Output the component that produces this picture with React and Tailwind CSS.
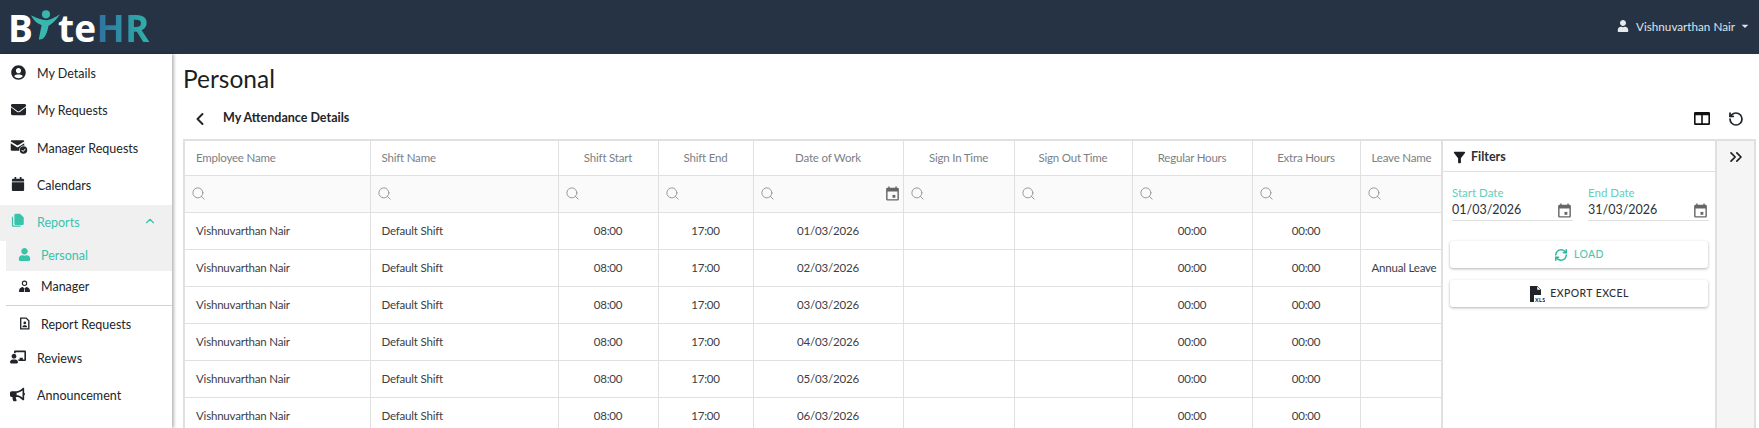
import React from 'react';
import { ChevronLeft, ChevronUp, ChevronsRight, RotateCcw, Search, RefreshCw } from 'lucide-react';
import { FaBullhorn, FaCalendar, FaChalkboardTeacher, FaEnvelope, FaUserCircle, FaUser } from 'react-icons/fa';
import { MdFilterAlt, MdArrowDropDown } from 'react-icons/md';

const columns = [
  { label: 'Employee Name', width: 'w-[185px]', left: true },
  { label: 'Shift Name', width: 'w-[188px]', left: true },
  { label: 'Shift Start', width: 'w-[100px]' },
  { label: 'Shift End', width: 'w-[95px]' },
  { label: 'Date of Work', width: 'w-[150px]', calendar: true },
  { label: 'Sign In Time', width: 'w-[111px]' },
  { label: 'Sign Out Time', width: 'w-[118px]' },
  { label: 'Regular Hours', width: 'w-[120px]' },
  { label: 'Extra Hours', width: 'w-[108px]' },
  { label: 'Leave Name', width: 'w-[85px]', left: true },
];

const rows = ['01', '02', '03', '04', '05', '06'];

const CalendarIcon = ({ className }) => (
  <svg viewBox="0 0 24 24" className={className} fill="currentColor">
    <path d="M19 4h-1V2h-2v2H8V2H6v2H5a2 2 0 0 0-2 2v14a2 2 0 0 0 2 2h14a2 2 0 0 0 2-2V6a2 2 0 0 0-2-2zm0 16H5V9h14v11z" />
    <rect x="12" y="14" width="4" height="4" />
  </svg>
);

const MailCheckIcon = ({ className }) => (
  <svg viewBox="0 0 24 20" className={className} fill="currentColor">
    <path d="M1 2.500A1.500 1.500 0 0 1 2.500 1h15A1.500 1.500 0 0 1 19 2.500L10 8 1 2.500z" />
    <path d="M1 5l9 5.500L19 5v3.200a6 6 0 0 0-6.800 6.800H2.500A1.500 1.500 0 0 1 1 13.500V5z" />
    <circle cx="18" cy="14" r="5" />
    <path d="M15.500 14l2 2 3-3.500" fill="none" stroke="#fff" strokeWidth="1.300" />
  </svg>
);

const ReportsIcon = ({ className }) => (
  <svg viewBox="0 0 24 24" className={className} fill="currentColor">
    <path d="M3 6h2v14h12v2H5a2 2 0 0 1-2-2V6z" />
    <path d="M9 1h7l6 6v10a2 2 0 0 1-2 2H9a2 2 0 0 1-2-2V3a2 2 0 0 1 2-2z" />
  </svg>
);

const ManagerIcon = ({ className }) => (
  <svg viewBox="0 0 24 24" className={className} fill="currentColor">
    <circle cx="12" cy="6" r="4" fill="none" stroke="currentColor" strokeWidth="2" />
    <path d="M2 22v-3c0-3 4-6 7-6l3 3 3-3c3 0 7 3 7 6v3H2z" />
    <path d="M12 17v5" stroke="#fff" strokeWidth="1.500" />
  </svg>
);

const ReportRequestIcon = ({ className }) => (
  <svg viewBox="0 0 24 24" className={className}>
    <path d="M5 2h10l5 5v15H5z" fill="none" stroke="currentColor" strokeWidth="2.500" />
    <circle cx="12.500" cy="11" r="2.500" fill="currentColor" />
    <path d="M8 19c0-3 2-4 4.500-4s4.500 1 4.500 4z" fill="currentColor" />
  </svg>
);

const ColumnsIcon = ({ className }) => (
  <svg viewBox="0 0 20 16" className={className} fill="currentColor">
    <path d="M1.500 0h17A1.500 1.500 0 0 1 20 1.500v13a1.500 1.500 0 0 1-1.500 1.500h-17A1.500 1.500 0 0 1 0 14.500v-13A1.500 1.500 0 0 1 1.500 0zM2 4v10h7V4H2zm9 0v10h7V4h-7z" fillRule="evenodd" />
  </svg>
);

const Logo = () => (
  <div className="flex items-center text-[37px] leading-none font-bold font-['Open_Sans',sans-serif] tracking-[0.2px] h-[30px]">
    <span className="text-white">B</span>
    <svg viewBox="0 0 30 32" className="w-[29px] h-[34px] -mx-[2px] -mt-[5px]">
      <circle cx="15.500" cy="5" r="4.200" fill="#38b6b0" />
      <path d="M0 6c3 6 7 9 11 10L8 31c6 1 9-7 10-14 4-2 8-6 12-12-5 3-10 6-14 6-5 0-10-2-16-5z" fill="#38b6b0" />
    </svg>
    <span className="text-white">te</span>
    <span className="bg-gradient-to-r from-[#2f6f9f] to-[#2fb3a8] bg-clip-text text-transparent">HR</span>
  </div>
);

const NavItem = ({ icon: Icon, label, className = 'h-[37px]', iconClass = 'w-[17px] h-[17px] mr-[10px]' }) => (
  <div className={`flex items-center pl-[10px] text-[#212529] ${className}`}>
    <span className="w-[27px] shrink-0 -mt-[5px]">
      <Icon className={iconClass} />
    </span>
    <span>{label}</span>
  </div>
);

const SubItem = ({ icon: Icon, label, className = '' }) => (
  <div className={`flex items-center ml-[6px] pl-[12px] ${className}`}>
    <span className="w-[23px] shrink-0 -mt-[3px]">
      <Icon className="w-[13px] h-[13px]" />
    </span>
    <span>{label}</span>
  </div>
);

const App = () => {
  return (
    <div className="h-screen overflow-hidden flex flex-col bg-white font-['Lato',sans-serif] text-[12.5px]">
      {/* Header */}
      <header className="h-[54px] shrink-0 bg-[#263345] flex items-center justify-between pl-[8px] pr-[6px]">
        <Logo />
        <div className="flex items-center text-[#dfe3e8] text-[11.7px] -mt-[1px]">
          <FaUser className="w-[12px] h-[12px] mr-[7px] text-[#e6e9ec]" />
          <span>Vishnuvarthan Nair</span>
          <MdArrowDropDown className="w-[16px] h-[16px] ml-[2px]" />
        </div>
      </header>

      <div className="flex flex-1 min-h-0">
        {/* Sidebar */}
        <aside className="w-[172px] shrink-0 pt-[2px] shadow-[2px_0_3px_rgba(0,0,0,0.28)] z-10">
          <NavItem icon={FaUserCircle} label="My Details" iconClass="w-[15px] h-[15px] ml-px" />
          <NavItem icon={FaEnvelope} label="My Requests" iconClass="w-[15px] h-[15px] ml-px" />
          <NavItem icon={MailCheckIcon} label="Manager Requests" className="h-[38px]" iconClass="w-[18px] h-[16px]" />
          <NavItem icon={FaCalendar} label="Calendars" iconClass="w-[14px] h-[14px] ml-px" />
          <div className="h-[36px] bg-[#f0f0f0] flex items-center pl-[10px] pr-[15px] text-[#38c3ab]">
            <span className="w-[27px] shrink-0 -mt-[5px]">
              <ReportsIcon className="w-[15px] h-[15px]" />
            </span>
            <span className="flex-1">Reports</span>
            <ChevronUp className="w-[14px] h-[14px] -mt-1" />
          </div>
          <SubItem icon={FaUser} label="Personal" className="h-[30px] bg-[#f0f0f0] text-[#38c3ab]" />
          <SubItem icon={ManagerIcon} label="Manager" className="h-[33px] text-[#212529]" />
          <div className="ml-[6px] border-t border-[#d2d2d2] mt-[1px]" />
          <SubItem icon={ReportRequestIcon} label="Report Requests" className="h-[38px] text-[#212529]" />
          <NavItem icon={FaChalkboardTeacher} label="Reviews" className="h-[30px]" iconClass="w-[16px] h-[16px]" />
          <NavItem icon={FaBullhorn} label="Announcement" className="h-[45px]" iconClass="w-[15px] h-[15px]" />
        </aside>

        {/* Main */}
        <main className="flex-1 min-w-0 pl-[11px] pr-[3px] flex flex-col">
          <h1 className="text-[24.5px] leading-[33px] mt-[8px] text-[#1b1f23]">Personal</h1>
          <div className="flex items-center h-[41px] mt-[3px] text-[#212529]">
            <ChevronLeft className="w-[20px] h-[20px] ml-[7px] mr-[13px]" strokeWidth={2.4} />
            <span className="text-[12.5px] font-bold flex-1">My Attendance Details</span>
            <ColumnsIcon className="w-[16px] h-[13px] mr-[18px] text-[#111]" />
            <RotateCcw className="w-[16px] h-[16px] mr-[12px]" strokeWidth={2.6} />
          </div>

          {/* Grid + filters */}
          <div className="flex-1 min-h-0 flex border-2 border-b-0 border-[#e0e0e0] overflow-hidden">
            <div className="w-[1258px] shrink-0 overflow-hidden border-r-2 border-[#e0e0e0]">
              <table className="table-fixed border-collapse w-[1260px] text-[11.5px] tracking-[-0.2px]">
                <thead>
                  <tr className="h-[34px] text-[#7b7f85]">
                    {columns.map((col) => (
                      <th
                        key={col.label}
                        className={`${col.width} font-normal whitespace-nowrap overflow-hidden border-r border-b border-[#e0e0e0] ${col.left ? 'text-left pl-[11px]' : 'text-center'}`}
                      >
                        {col.label}
                      </th>
                    ))}
                  </tr>
                  <tr className="h-[37px] bg-[#fafafa] text-[#9a9a9a]">
                    {columns.map((col) => (
                      <th key={col.label} className="border-r border-b border-[#e0e0e0] pl-[6px] pr-[2px] font-normal">
                        <div className="flex items-center justify-between">
                          <Search className="w-[15px] h-[15px]" strokeWidth={1.6} />
                          {col.calendar && <CalendarIcon className="w-[17px] h-[17px] text-[#666]" />}
                        </div>
                      </th>
                    ))}
                  </tr>
                </thead>
                <tbody className="text-[#3c4045]">
                  {rows.map((day) => (
                    <tr key={day} className="h-[37px]">
                      <td className="pl-[11px] border-r border-b border-[#e0e0e0]">Vishnuvarthan Nair</td>
                      <td className="pl-[11px] border-r border-b border-[#e0e0e0]">Default Shift</td>
                      <td className="text-center border-r border-b border-[#e0e0e0]">08:00</td>
                      <td className="text-center border-r border-b border-[#e0e0e0]">17:00</td>
                      <td className="text-center border-r border-b border-[#e0e0e0]">{day}/03/2026</td>
                      <td className="border-r border-b border-[#e0e0e0]" />
                      <td className="border-r border-b border-[#e0e0e0]" />
                      <td className="text-center border-r border-b border-[#e0e0e0]">00:00</td>
                      <td className="text-center border-r border-b border-[#e0e0e0]">00:00</td>
                      <td className="pl-[11px] whitespace-nowrap border-b border-[#e0e0e0]">{day === '02' ? 'Annual Leave' : ''}</td>
                    </tr>
                  ))}
                </tbody>
              </table>
            </div>

            {/* Filters */}
            <div className="w-[272px] shrink-0">
              <div className="h-[31px] pt-[2px] border-b border-[#e0e0e0] flex items-center pl-[8px] text-[12.5px] font-bold text-[#2c3036]">
                <MdFilterAlt className="w-[17px] h-[17px] mr-[3px] text-[#1b1f23]" />
                Filters
              </div>
              <div className="flex gap-[15px] pl-[9px] pr-[6px] mt-[13px]">
                {['01/03/2026', '31/03/2026'].map((value, i) => (
                  <div key={value} className="w-[121px] border-b border-[#e0e0e0]">
                    <div className="text-[11.5px] leading-[15px] text-[#66cdbb]">{i === 0 ? 'Start Date' : 'End Date'}</div>
                    <div className="flex items-center justify-between h-[20px] text-[12.5px] text-[#2c3036]">
                      {value}
                      <CalendarIcon className="w-[17px] h-[17px] text-[#666]" />
                    </div>
                  </div>
                ))}
              </div>
              <div className="mt-[20px] mx-[7px] flex flex-col gap-[12px]">
                <button className="h-[27px] pt-px rounded-[3px] shadow-[0_1px_3px_rgba(0,0,0,0.3)] flex items-center justify-center text-[10.5px] tracking-[0.4px] font-medium text-[#52c5b0]">
                  <RefreshCw className="w-[14px] h-[14px] mr-[6px] text-[#2fb8a0]" strokeWidth={2.6} />
                  LOAD
                </button>
                <button className="h-[27px] rounded-[3px] shadow-[0_1px_3px_rgba(0,0,0,0.3)] flex items-center justify-center text-[10.5px] tracking-[0.4px] font-medium text-[#2c3036]">
                  <svg viewBox="0 0 16 16" className="w-[16px] h-[16px] mr-[5px]">
                    <path d="M1 0h7l4 4v5H5v7H1z" fill="#1f242b" />
                    <path d="M8 0v4h4z" fill="#fff" stroke="#1f242b" strokeWidth="0.5" />
                    <text x="6" y="15.5" fontSize="5.5" fontWeight="700" fill="#1f242b">XLS</text>
                  </svg>
                  EXPORT EXCEL
                </button>
              </div>
            </div>

            {/* Collapsed side strip */}
            <div className="flex-1 bg-[#f5f5f5] border-l-2 border-[#e0e0e0] flex justify-center pt-[6px]">
              <ChevronsRight className="w-[20px] h-[20px] text-[#1b1f23]" strokeWidth={2} />
            </div>
          </div>
        </main>
      </div>
    </div>
  );
};

export default App;
